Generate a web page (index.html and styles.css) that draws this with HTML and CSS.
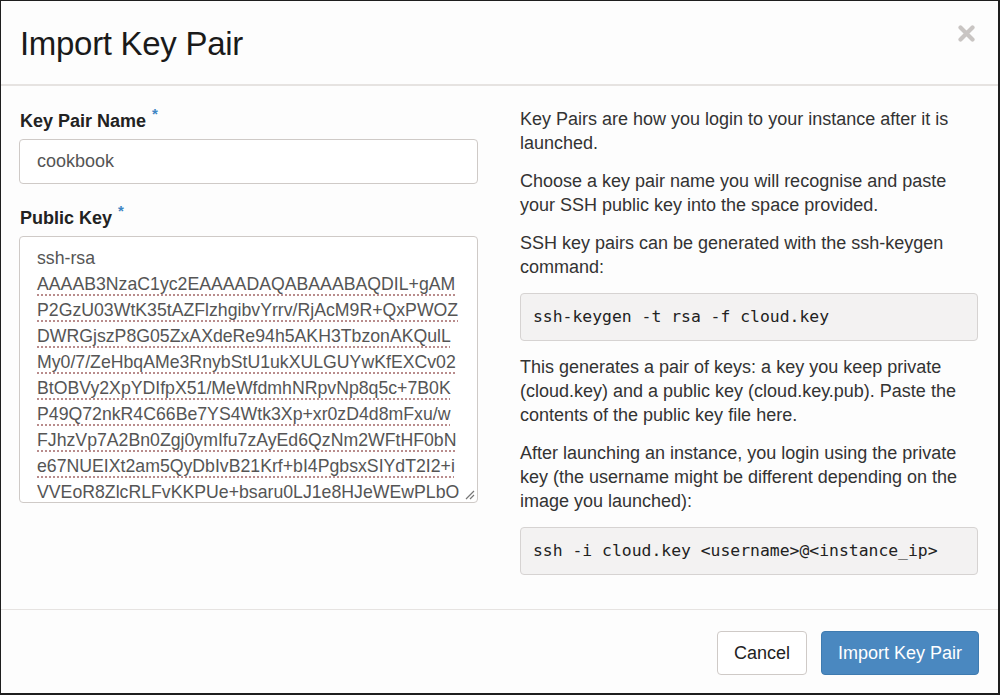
FILE: index.html
```html
<!DOCTYPE html>
<html lang="en">
<head>
<meta charset="utf-8">
<title>Import Key Pair</title>
<link rel="stylesheet" href="styles.css">
</head>
<body>
<div class="modal">
  <div class="modal-header">
    <h1 class="modal-title">Import Key Pair</h1>
    <button class="close" type="button" aria-label="Close">
      <svg width="17" height="17" viewBox="0 0 17 17"><path d="M2.5 2.5 L14.5 14.5 M14.5 2.5 L2.5 14.5" stroke="#c9c5c3" stroke-width="4.2" stroke-linecap="round"/></svg>
    </button>
  </div>
  <div class="modal-body">
    <div class="col form-col">
      <div class="field">
        <label class="label">Key Pair Name <span class="req">*</span></label>
        <div class="input">cookbook</div>
      </div>
      <div class="field">
        <label class="label">Public Key <span class="req">*</span></label>
        <div class="textarea">
          <div class="line">ssh-rsa</div>
          <div class="line sp">AAAAB3NzaC1yc2EAAAADAQABAAABAQDIL+gAM</div>
          <div class="line sp">P2GzU03WtK35tAZFlzhgibvYrrv/RjAcM9R+QxPWOZ</div>
          <div class="line sp">DWRGjszP8G05ZxAXdeRe94h5AKH3TbzonAKQulL</div>
          <div class="line sp">My0/7/ZeHbqAMe3RnybStU1ukXULGUYwKfEXCv02</div>
          <div class="line sp">BtOBVy2XpYDIfpX51/MeWfdmhNRpvNp8q5c+7B0K</div>
          <div class="line sp">P49Q72nkR4C66Be7YS4Wtk3Xp+xr0zD4d8mFxu/w</div>
          <div class="line sp">FJhzVp7A2Bn0Zgj0ymIfu7zAyEd6QzNm2WFtHF0bN</div>
          <div class="line sp">e67NUEIXt2am5QyDbIvB21Krf+bI4PgbsxSIYdT2I2+i</div>
          <div class="line sp">VVEoR8ZlcRLFvKKPUe+bsaru0LJ1e8HJeWEwPLbO</div>
          <svg class="grip" width="10" height="10" viewBox="0 0 10 10"><path d="M9 1 L1 9 M9 5 L5 9" stroke="#777" stroke-width="1.2"/></svg>
        </div>
      </div>
    </div>
    <div class="col help-col">
      <p>Key Pairs are how you login to your instance after it is launched.</p>
      <p>Choose a key pair name you will recognise and paste your SSH public key into the space provided.</p>
      <p>SSH key pairs can be generated with the ssh-keygen command:</p>
      <pre class="code">ssh-keygen -t rsa -f cloud.key</pre>
      <p>This generates a pair of keys: a key you keep private (cloud.key) and a public key (cloud.key.pub). Paste the contents of the public key file here.</p>
      <p>After launching an instance, you login using the private key (the username might be different depending on the image you launched):</p>
      <pre class="code">ssh -i cloud.key &lt;username&gt;@&lt;instance_ip&gt;</pre>
    </div>
  </div>
  <div class="modal-footer">
    <button class="btn btn-default" type="button">Cancel</button>
    <button class="btn btn-primary" type="button">Import Key Pair</button>
  </div>
</div>
</body>
</html>
```

FILE: styles.css
```css
* { box-sizing: border-box; }

html, body {
  margin: 0;
  padding: 0;
  height: 100%;
}

body {
  background: #1e1e1e;
  font-family: "Liberation Sans", Arial, Helvetica, sans-serif;
  color: #333;
  padding: 1px 2px 2px 1px;
}

.modal {
  background: #fdfdfd;
  height: 100%;
  display: flex;
  flex-direction: column;
}

.modal-header {
  height: 85px;
  border-bottom: 2px solid #e6e3e1;
  display: flex;
  align-items: flex-start;
  justify-content: space-between;
  padding: 0 20px 0 19px;
}

.modal-title {
  margin: 24px 0 0 0;
  font-size: 33px;
  font-weight: normal;
  color: #1a1a1a;
  letter-spacing: -0.3px;
  line-height: 38px;
}

.close {
  background: none;
  border: 0;
  padding: 0;
  margin-top: 24px;
  margin-right: 3px;
  cursor: pointer;
  display: flex;
}

.modal-body {
  flex: 1;
  display: grid;
  grid-template-columns: 459px 458px;
  column-gap: 42px;
  padding: 12px 0 0 18px;
  border-bottom: 1px solid #e6e3e1;
}

.field { display: flex; flex-direction: column; }

.label {
  font-size: 18px;
  font-weight: bold;
  color: #222;
  line-height: 24px;
  margin: 4px 0 6px 1px;
}

.field + .field .label { margin-top: 15px; }

.req {
  color: #3f86c4;
  font-size: 15px;
  vertical-align: 8px;
  margin-left: 1px;
}

.input {
  height: 45px;
  border: 1px solid #cfcac7;
  border-radius: 4px;
  padding: 0 17px;
  font-size: 18px;
  line-height: 43px;
  color: #555;
  background: #fff;
}

.textarea {
  position: relative;
  height: 267px;
  border: 1px solid #cfcac7;
  border-radius: 4px;
  padding: 8px 17px;
  font-size: 17.7px;
  line-height: 26px;
  color: #555;
  background: #fff;
  white-space: nowrap;
  overflow: hidden;
}

.line.sp {
  text-decoration: underline dotted #b98c8c;
  text-decoration-thickness: 2px;
  text-underline-offset: 4px;
}

.grip {
  position: absolute;
  right: 2px;
  bottom: 2px;
}

.help-col p {
  margin: 9px 0 14px 0;
  font-size: 18px;
  line-height: 24px;
  color: #333;
}

.help-col p + p { margin-top: 0; }

.code {
  margin: 0 0 14px 0;
  background: #f3f2f2;
  border: 1px solid #d6d3d2;
  border-radius: 4px;
  height: 48px;
  padding: 0 12px;
  font-family: "DejaVu Sans Mono", "Liberation Mono", monospace;
  font-size: 16.4px;
  line-height: 46px;
  color: #222;
}

.modal-footer {
  height: 83px;
  display: flex;
  justify-content: flex-end;
  align-items: flex-start;
  gap: 14px;
  padding: 21px 19px 0 0;
}

.btn {
  height: 44px;
  border-radius: 4px;
  font-family: "Liberation Sans", Arial, sans-serif;
  font-size: 18px;
  padding: 0 12px;
  cursor: pointer;
}

.btn-default {
  background: #fff;
  border: 1px solid #cfcac7;
  color: #222;
  width: 90px;
}

.btn-primary {
  background: #4a88c0;
  border: 1px solid #3f7bb0;
  color: #fff;
  width: 158px;
}
```
